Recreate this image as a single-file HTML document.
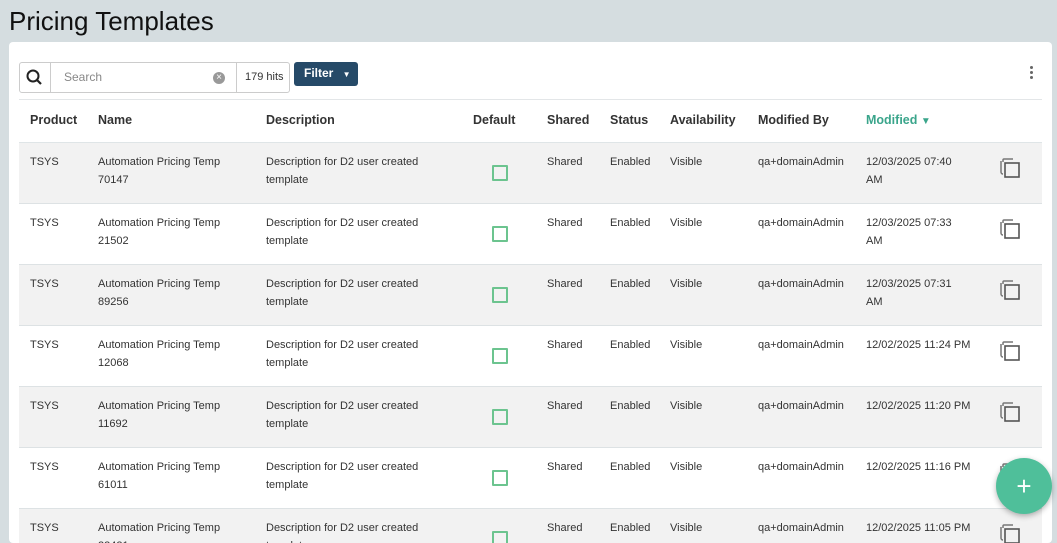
<!DOCTYPE html>
<html><head><style>
html{overflow:hidden;height:543px}
body{margin:0;width:1057px;height:543px;overflow:hidden;background:#d5dde0;font-family:"Liberation Sans",sans-serif;color:#333;position:relative}
h1{position:absolute;left:9px;top:6px;margin:0;font-weight:normal;font-size:26px;color:#111}
.card{position:absolute;left:9px;top:42px;width:1043px;height:501px;background:#fff;border-radius:4px}
.sb{position:absolute;left:10px;top:20px;width:269px;height:29px;border:1px solid #ccc;border-radius:3px;font-size:12px}
.sb .ic{position:absolute;left:0;top:0;width:30px;height:29px;border-right:1px solid #ccc}
.sb .ph{position:absolute;left:44px;top:7px;color:#888}
.sb .x{position:absolute;left:193px;top:9px;width:12px;height:12px;border-radius:50%;background:#999;color:#fff;font-size:10px;line-height:12px;text-align:center}
.sb .hits{position:absolute;left:216px;top:0;height:29px;border-left:1px solid #ccc;padding-left:8px;line-height:29px;font-size:11px}
.flt{position:absolute;left:285px;top:20px;width:64px;height:24px;background:#264a68;border-radius:3px;color:#fff;font-size:12px;font-weight:bold;line-height:22px;padding-left:10px;box-sizing:border-box}
.dots{position:absolute;left:1021px;top:24px;width:3px}
.dots i{display:block;width:3px;height:3px;border-radius:50%;background:#666;margin-bottom:2px}
.hd{position:absolute;left:10px;top:57px;width:1023px;height:42px;border-top:1px solid #e3e6e8;border-bottom:3px solid #dfe5e7;font-size:12.5px;font-weight:bold}
.hd span,.row span{position:absolute}
.hd span{top:13px}
.row{position:absolute;left:10px;width:1023px;height:60px;border-bottom:1px solid #dde2e4;font-size:11px;line-height:18px}
.row.g{background:#f2f2f2}
.row span{top:10px}
.cb{position:absolute;left:473px;top:22px;width:12px;height:12px;border:2px solid #6cc48f;border-radius:1px}
.cp{position:absolute;left:980px;top:14px}
.fab{position:absolute;left:996px;top:458px;width:56px;height:56px;border-radius:50%;background:#4fbf9a;box-shadow:0 2px 6px rgba(0,0,0,.3);color:#fff;font-size:26px;text-align:center;line-height:56px}
</style></head><body>
<h1>Pricing Templates</h1>
<div class="card">
<div class="sb"><div class="ic"><svg width="30" height="29"><circle cx="13" cy="13" r="5.5" fill="none" stroke="#222" stroke-width="2"/><line x1="17" y1="17" x2="21" y2="21" stroke="#222" stroke-width="2.2"/></svg></div><span class="ph">Search</span><span class="x">×</span><span class="hits">179 hits</span></div>
<div class="flt">Filter <span style="font-size:8px;margin-left:6px">▼</span></div>
<div class="dots"><i></i><i></i><i></i></div>
<div class="hd"><span style="left:11px">Product</span><span style="left:79px">Name</span><span style="left:247px">Description</span><span style="left:454px">Default</span><span style="left:528px">Shared</span><span style="left:591px">Status</span><span style="left:651px">Availability</span><span style="left:739px">Modified By</span><span style="left:847px;color:#3aa58b">Modified <span style="position:static;font-size:10px">▼</span></span></div>
</div>
<div id="rows"></div>
<div class="fab">+</div>
<script>
var d=[["70147","12/03/2025 07:40<br>AM"],["21502","12/03/2025 07:33<br>AM"],["89256","12/03/2025 07:31<br>AM"],["12068","12/02/2025 11:24 PM"],["11692","12/02/2025 11:20 PM"],["61011","12/02/2025 11:16 PM"],["22421","12/02/2025 11:05 PM"]];
var h="";d.forEach(function(r,i){h+='<div class="row'+(i%2==0?' g':'')+'" style="top:'+(143+61*i)+'px;left:19px"><span style="left:11px">TSYS</span><span style="left:79px">Automation Pricing Temp<br>'+r[0]+'</span><span style="left:247px">Description for D2 user created<br>template</span><div class="cb"></div><span style="left:528px">Shared</span><span style="left:591px">Enabled</span><span style="left:651px">Visible</span><span style="left:739px">qa+domainAdmin</span><span style="left:847px">'+r[1]+'</span><svg class="cp" width="22" height="22"><path d="M2 4v11a2 2 0 0 0 2 2" fill="none" stroke="#777" stroke-width="1.5"/><path d="M4 5V3a1 1 0 0 1 1-1h9" fill="none" stroke="#777" stroke-width="1.5"/><rect x="6" y="6" width="14" height="14" fill="none" stroke="#555" stroke-width="1.6"/></svg></div>'});
document.getElementById("rows").innerHTML=h;
</script>
</body></html>
